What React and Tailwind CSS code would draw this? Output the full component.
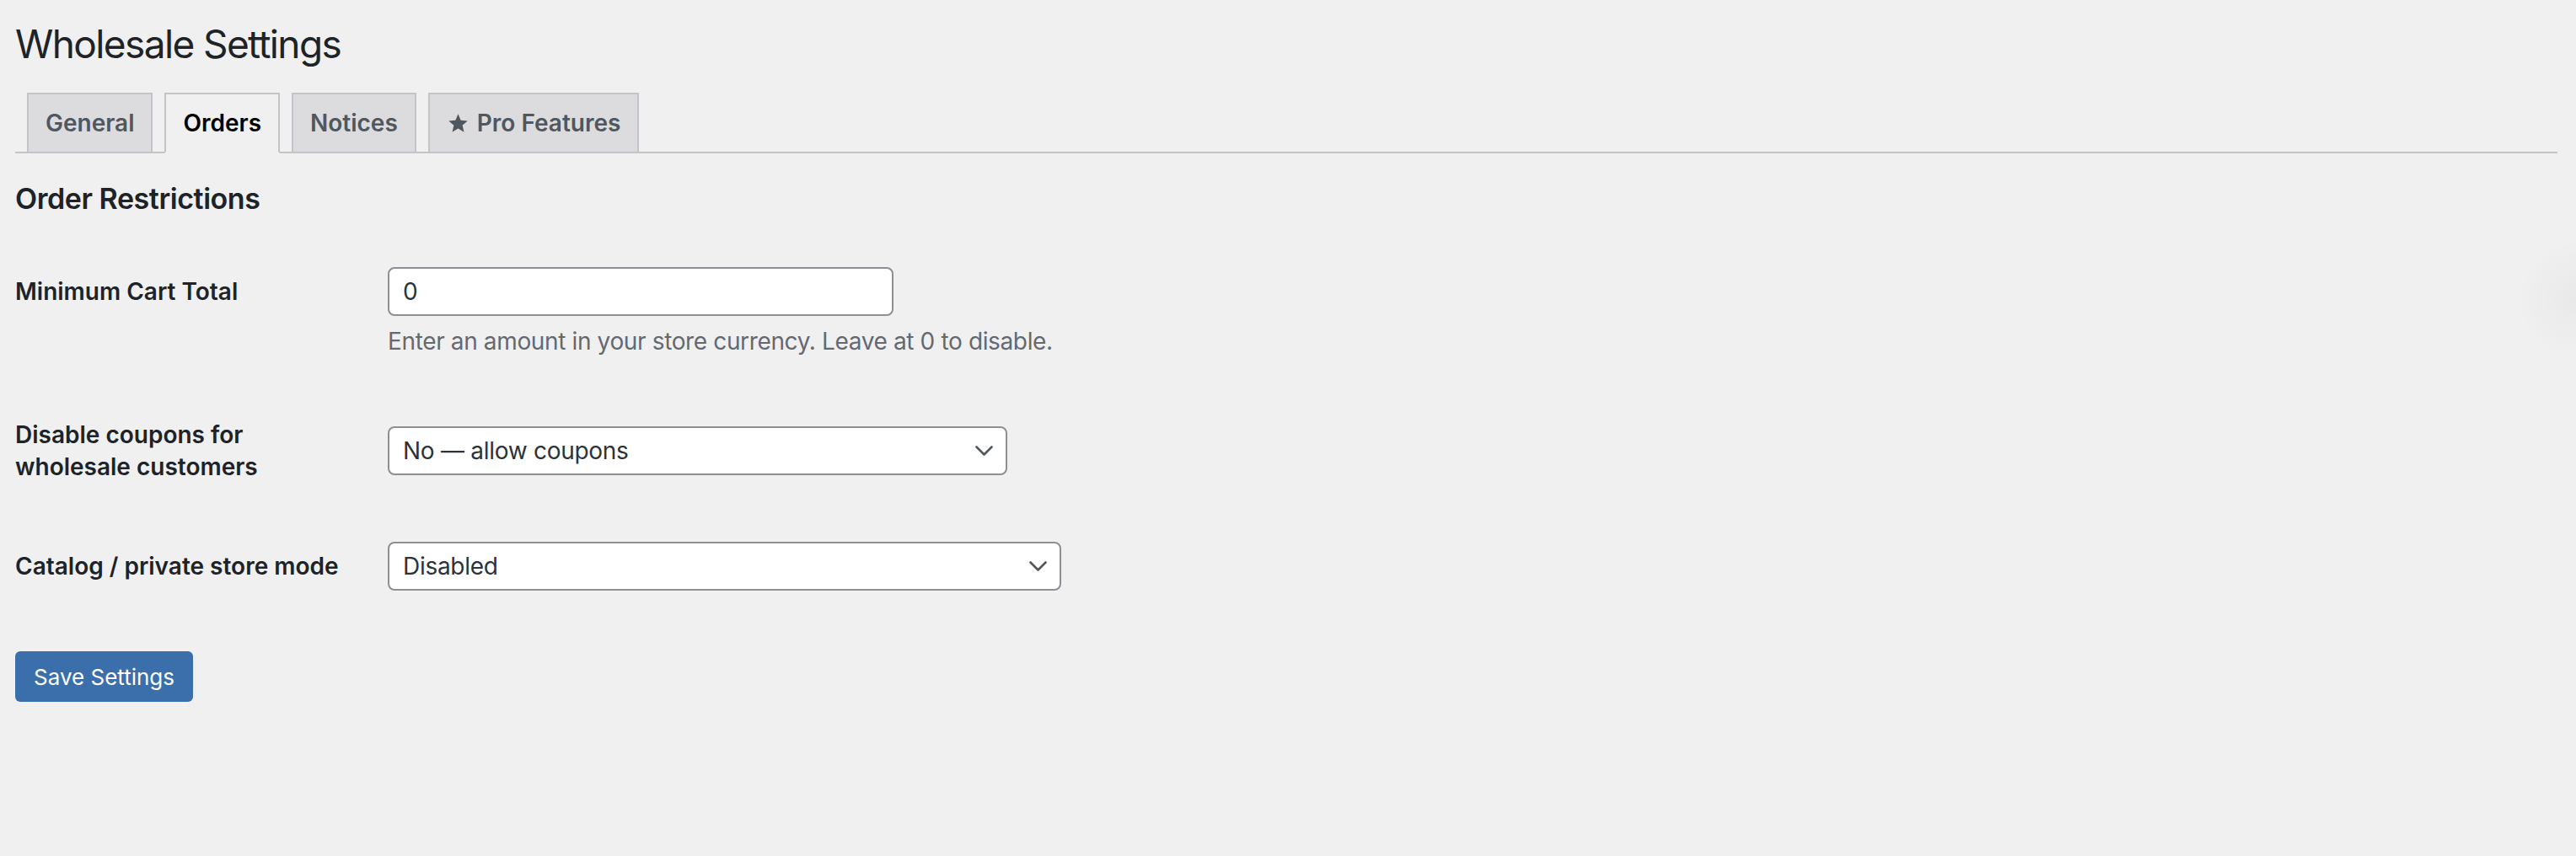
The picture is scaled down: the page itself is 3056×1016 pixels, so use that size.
import React from 'react';

const tabs = [
    { label: 'General' },
    { label: 'Orders', active: true },
    { label: 'Notices' },
    { label: 'Pro Features', star: true },
];

const Chevron = () => (
    <svg className="pointer-events-none absolute right-[17px] top-1/2 -translate-y-1/2 w-[21px] h-[12px]" viewBox="0 0 21 12" fill="none">
        <path d="M1.5 1.5 L10.5 10.5 L19.5 1.5" stroke="#50575e" strokeWidth="2.6" strokeLinecap="round" strokeLinejoin="round" />
    </svg>
);

const Star = () => (
    <svg className="w-[25px] h-[25px] ml-[1px] mr-[10px]" viewBox="0 0 24 24">
        <path d="M12 1.2 L15 8.4 L22.8 9 L16.9 14.1 L18.7 21.8 L12 17.7 L5.3 21.8 L7.1 14.1 L1.2 9 L9 8.4 Z" fill="#50575e" />
    </svg>
);

const Select = ({ value, width }) => (
    <div className={`relative ${width}`}>
        <select
            defaultValue={value}
            className="w-full h-[58px] appearance-none border-2 border-[#8c8f94] rounded-[8px] bg-white pl-[16px] pr-[60px] text-[28px] tracking-[-0.01em] text-[#2c3338] outline-none"
        >
            <option>{value}</option>
        </select>
        <Chevron />
    </div>
);

const Label = ({ children }) => (
    <div className="w-[400px] mr-[42px] shrink-0 text-[28px] leading-[38px] font-semibold text-[#1d2327]">
        {children}
    </div>
);

export default function App() {
    return (
        <div className="relative min-h-screen overflow-hidden bg-[#f0f0f1] pl-[18px] pr-[22px] pt-[22px] font-['Inter',sans-serif] text-[#1d2327]">
            <h1 className="text-[46px] leading-[60px] font-normal tracking-[-0.035em]">Wholesale Settings</h1>

            {/* tab strip */}
            <div className="mt-[28px] flex gap-[14px] pl-[14px] border-b-2 border-[#c3c4c7]">
                {tabs.map((t) => (
                    <div
                        key={t.label}
                        className={`-mb-[2px] flex items-center border-2 px-[20px] py-[10px] text-[28px] leading-[48px] font-semibold ${
                            t.active
                                ? 'bg-[#f0f0f1] border-[#c3c4c7] border-b-[#f0f0f1] text-black'
                                : 'bg-[#dcdcde] border-[#c3c4c7] text-[#50575e]'
                        }`}
                    >
                        {t.star && <Star />}
                        {t.label}
                    </div>
                ))}
            </div>

            <h2 className="mt-[33px] text-[34px] leading-[41px] font-semibold tracking-[-0.013em]">Order Restrictions</h2>

            <div className="mt-[61px] flex items-center">
                <Label>Minimum Cart Total</Label>
                <input
                    type="text"
                    defaultValue="0"
                    className="w-[600px] h-[58px] border-2 border-[#8c8f94] rounded-[8px] bg-white px-[16px] text-[28px] text-[#2c3338] outline-none"
                />
            </div>
            <p className="mt-[9px] pl-[442px] text-[28px] leading-[42px] tracking-[-0.013em] text-[#646970]">
                Enter an amount in your store currency. Leave at 0 to disable.
            </p>

            <div className="mt-[71px] flex items-center">
                <Label>Disable coupons for wholesale customers</Label>
                <Select value="No — allow coupons" width="w-[735px]" />
            </div>

            <div className="mt-[70px] flex items-center">
                <Label>Catalog / private store mode</Label>
                <Select value="Disabled" width="w-[799px]" />
            </div>

            <button className="mt-[72px] h-[60px] px-[22px] rounded-[6px] bg-[#3b6fab] text-[26px] text-white">
                Save Settings
            </button>

            {/* faint shadow at the right edge */}
            <div className="pointer-events-none absolute -right-[70px] top-[285px] w-[140px] h-[140px] rounded-full bg-[radial-gradient(circle,rgba(0,0,0,0.03),transparent_70%)]"></div>
        </div>
    );
}
